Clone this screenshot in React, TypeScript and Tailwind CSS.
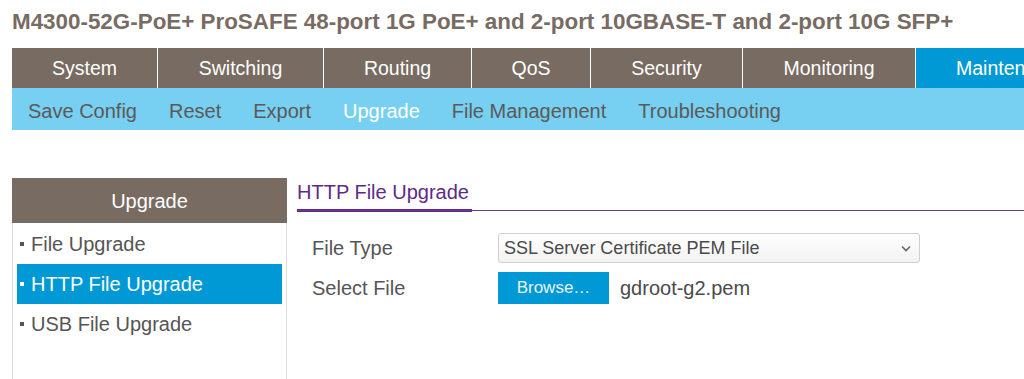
import React from "react";

const tabs = [
  { label: "System", w: "w-[146px]" },
  { label: "Switching", w: "w-[166px]" },
  { label: "Routing", w: "w-[148px]" },
  { label: "QoS", w: "w-[119px]" },
  { label: "Security", w: "w-[152px]" },
  { label: "Monitoring", w: "w-[173px]" },
];

const subs = ["Save Config", "Reset", "Export", "Upgrade", "File Management", "Troubleshooting"];

export default function App() {
  return (
    <div
      className="w-[1024px] h-[379px] overflow-hidden bg-white"
      style={{ fontFamily: '"Liberation Sans", Arial, sans-serif' }}
    >
      <div className="pl-[12px] pt-[10px] h-[48px] text-[22.4px] leading-[24px] font-bold text-[#776b64] whitespace-nowrap">
        M4300-52G-PoE+ ProSAFE 48-port 1G PoE+ and 2-port 10GBASE-T and 2-port 10G SFP+
      </div>
      <div className="ml-[12px] flex h-[40px] text-[19.5px] text-white whitespace-nowrap">
        {tabs.map((t) => (
          <div
            key={t.label}
            className={`${t.w} shrink-0 bg-[#776b62] border-r border-white flex items-center justify-center pt-[1px]`}
          >
            {t.label}
          </div>
        ))}
        <div className="flex-1 min-w-0 bg-[#0099d6] flex items-center pl-[40px] pt-[1px] overflow-hidden">Maintenance</div>
      </div>
      <div className="ml-[12px] flex items-center h-[42px] pt-[3px] bg-[#77cff1] text-[20px] text-[#5b5a59] whitespace-nowrap pl-[16px] gap-[32px]">
        {subs.map((s) => (
          <span key={s} className={s === "Upgrade" ? "text-white" : ""}>
            {s}
          </span>
        ))}
      </div>
      <div className="flex mt-[48px]">
        <div className="ml-[12px] w-[275px] h-[210px] shrink-0 border-x border-[#dcdcdc] flex flex-col">
          <div className="h-[45px] bg-[#776b62] text-white text-[20px] flex items-center justify-center -mx-px">
            Upgrade
          </div>
          <div className="flex flex-col pt-[1px] text-[20px] text-[#555555]">
            {[
              { l: "File Upgrade", a: false },
              { l: "HTTP File Upgrade", a: true },
              { l: "USB File Upgrade", a: false },
            ].map((it) => (
              <div
                key={it.l}
                className={`mx-[4px] h-[40px] flex items-center pl-[3px] ${
                  it.a ? "bg-[#0099d6] text-white" : ""
                }`}
              >
                <span className="inline-block w-[4px] h-[4px] bg-current mr-[7px] mb-[1px]" />
                {it.l}
              </div>
            ))}
          </div>
        </div>
        <div className="flex-1 ml-[10px] flex flex-col">
          <div className="relative h-[34px]">
            <div className="inline-block text-[20px] leading-[23px] text-[#5d2b87] pt-[3px] pb-[5px] pr-[3px] border-b-[3px] border-[#5d2b87]">
              HTTP File Upgrade
            </div>
            <div className="absolute left-0 right-0 top-[32px] h-[1px] bg-[#6a3a92]" />
          </div>
          <div className="mt-[21px] pl-[15px] flex flex-col text-[20px] text-[#555555]">
            <div className="flex items-center h-[30px]">
              <span className="w-[186px] shrink-0">File Type</span>
              <div className="w-[422px] h-[30px] border border-[#cfcfcf] rounded-[3px] bg-gradient-to-b from-white to-[#f2f2f2] flex items-center pl-[5px] pr-[8px] text-[18px] text-[#4a4a4a]">
                <span className="flex-1">SSL Server Certificate PEM File</span>
                <svg width="10" height="7" viewBox="0 0 10 7">
                  <path d="M1 1.5 L5 5.5 L9 1.5" stroke="#666" strokeWidth="1.6" fill="none" />
                </svg>
              </div>
            </div>
            <div className="flex items-center h-[32px] mt-[9px]">
              <span className="w-[186px] shrink-0">Select File</span>
              <div className="w-[111px] h-[32px] bg-[#0099d6] text-[#e8f3f9] flex items-center justify-center text-[17px]">
                Browse…
              </div>
              <span className="ml-[11px] text-[#4a4a4a]">gdroot-g2.pem</span>
            </div>
          </div>
        </div>
      </div>
    </div>
  );
}
